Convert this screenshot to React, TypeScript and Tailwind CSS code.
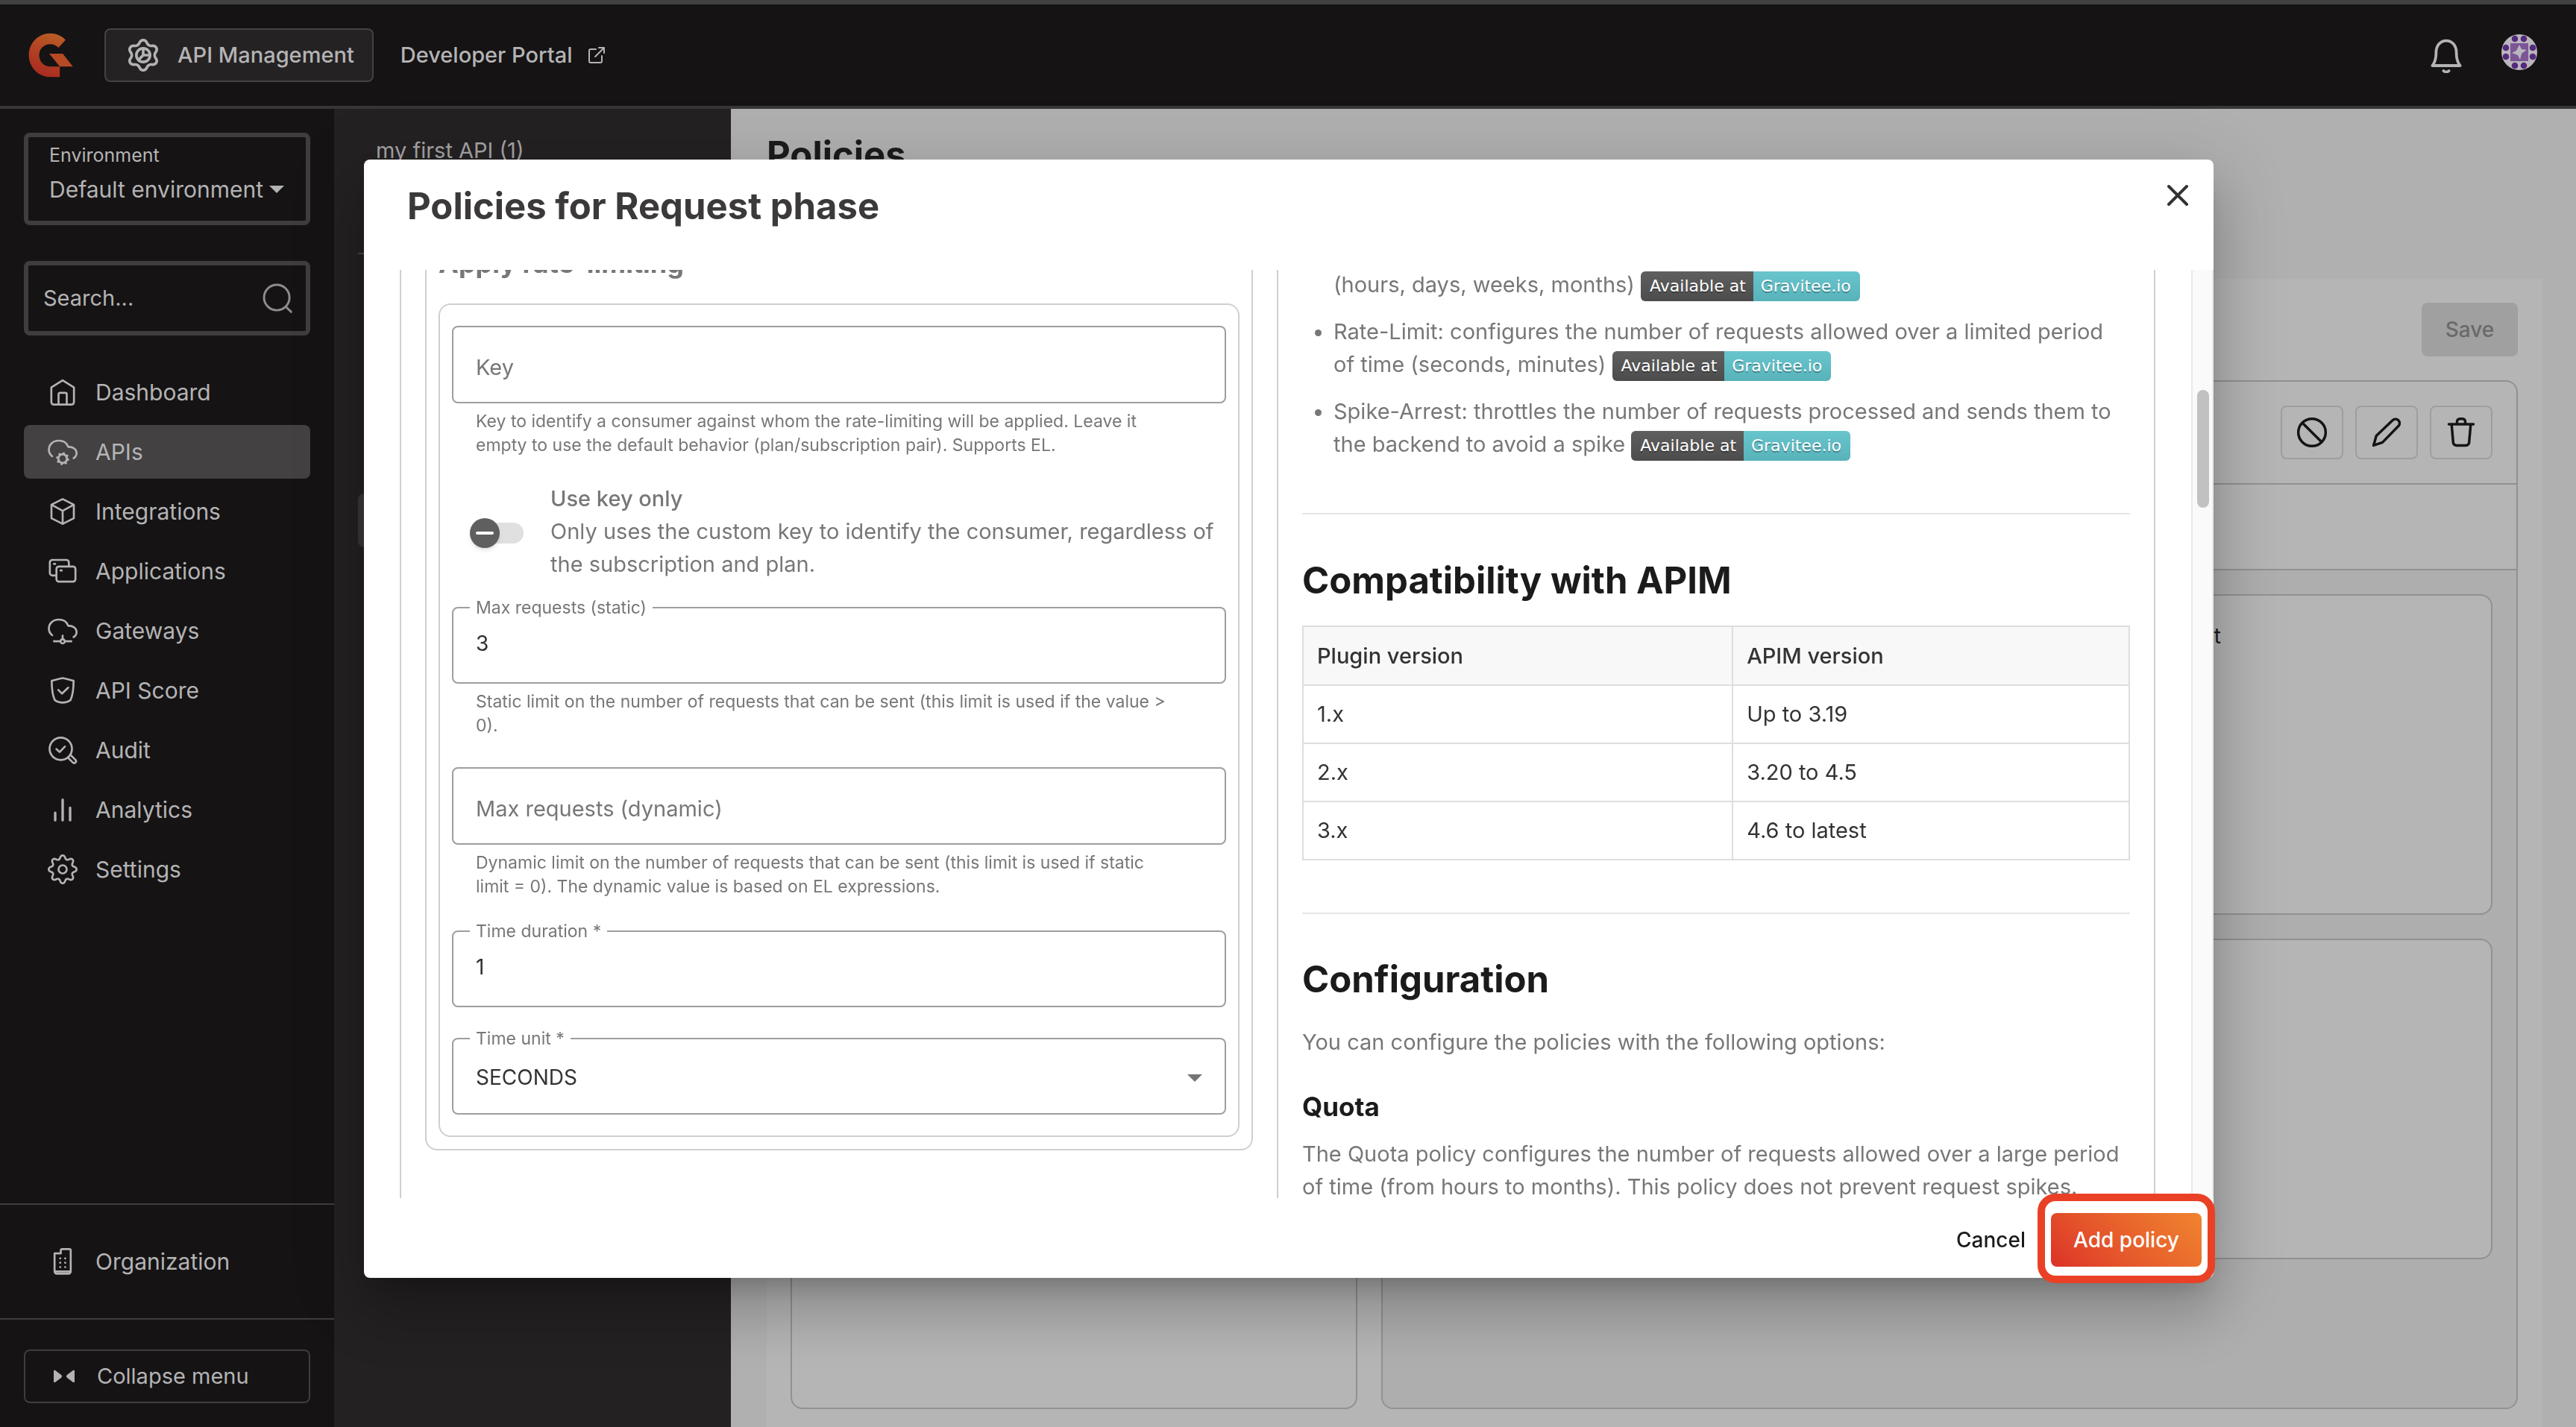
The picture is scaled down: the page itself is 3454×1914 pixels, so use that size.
import { useId, type ReactNode } from "react";

/** Closed outline of a cog with rounded teeth, centred in a 24 x 24 box. */
function cogPath(teeth: number, radius: number, depth: number, sharp: number) {
  const points: string[] = [];
  for (let i = 0; i < 180; i++) {
    const angle = (i / 180) * Math.PI * 2;
    const wave = Math.tanh(sharp * Math.cos(teeth * angle)) / Math.tanh(sharp);
    const r = radius + depth * wave;
    points.push(`${(12 + r * Math.sin(angle)).toFixed(2)} ${(12 - r * Math.cos(angle)).toFixed(2)}`);
  }
  return `M${points.join("L")}Z`;
}

function Icon({ children, className = "size-10" }: { children: ReactNode; className?: string }) {
  return (
    <svg
      viewBox="0 0 24 24"
      className={`${className} shrink-0`}
      fill="none"
      stroke="currentColor"
      strokeWidth="1.6"
      strokeLinecap="round"
      strokeLinejoin="round"
      aria-hidden="true"
    >
      {children}
    </svg>
  );
}

const cloud = "M3.6 15.6C2 14.4.9 12.6.9 10.4.9 6.200 4.300 3 8.800 3c3.600 0 6.600 1.900 7.700 5 3.800-.2 6.700 1.900 6.700 5.100 0 1.700-.9 3.200-2.400 4";

const navItems: { label: string; active?: boolean; icon: ReactNode }[] = [
  {
    label: "Dashboard",
    icon: (
      <>
        <path d="M2.900 8.200 12 2.500l9.100 5.700V20a2 2 0 0 1-2 2H4.900a2 2 0 0 1-2-2Z" />
        <path d="M8.700 22v-8.300a1.200 1.200 0 0 1 1.200-1.200h4.200a1.200 1.200 0 0 1 1.200 1.200V22" />
      </>
    ),
  },
  {
    label: "APIs",
    active: true,
    icon: (
      <>
        <path d={cloud} />
        <circle cx="12" cy="17.500" r="3.500" strokeWidth="1.800" />
        <circle cx="12" cy="17.500" r="4.600" strokeWidth="1.300" strokeDasharray="1.600 2.010" strokeLinecap="butt" />
      </>
    ),
  },
  {
    label: "Integrations",
    icon: (
      <>
        <path d="M12 2 21 6.500v11L12 22l-9-4.500v-11Z" />
        <path d="M3.200 6.700 12 11.500l8.800-4.800M12 11.500V22" />
      </>
    ),
  },
  {
    label: "Applications",
    icon: (
      <>
        <rect x="7" y="8.300" width="15.300" height="12.200" rx="2" />
        <path d="M7 15.500H3.700a2 2 0 0 1-2-2V5a2 2 0 0 1 2-2H15a2 2 0 0 1 2 2v3.300M5 6.200h1M10.300 11.500h1" />
      </>
    ),
  },
  {
    label: "Gateways",
    icon: (
      <>
        <path d={cloud} />
        <circle cx="12" cy="20.500" r="1.700" />
        <path d="M12 18.800V16M5 20.500h5.300M13.700 20.500H19" />
      </>
    ),
  },
  {
    label: "API Score",
    icon: (
      <>
        <path d="M3.200 4.300C6 3.700 9 2.600 12 2.100c3 .5 6 1.600 8.800 2.200 0 6-.6 11.200-2.400 15.400-1.900 1.400-4 2.100-6.400 2.100s-4.500-.7-6.400-2.100C3.800 15.500 3.200 10.300 3.200 4.300Z" />
        <path d="m8.500 11.600 3 3 5-4.800" />
      </>
    ),
  },
  {
    label: "Audit",
    icon: (
      <>
        <circle cx="10.500" cy="11" r="9" />
        <path d="m7 11.200 2.600 2.400 4.200-4.400M16.200 18l3.900 4a1.500 1.500 0 0 0 2.200-2.100l-4-4" />
      </>
    ),
  },
  { label: "Analytics", icon: <path d="M6 20.500v-6M12 20.500V4M18 20.500v-10" strokeWidth="2" /> },
  {
    label: "Settings",
    icon: (
      <>
        <path d={cogPath(8, 9.800, 1.400, 1)} />
        <circle cx="12" cy="12" r="3.300" />
      </>
    ),
  },
];

function TopBar() {
  return (
    <header className="flex h-[146px] shrink-0 items-center border-t-[6px] border-b-4 border-t-[#424142] border-b-[#383738] bg-[#151314] pr-[52px] pl-[38px] text-[#b4b3b4]">
      <svg viewBox="55 40 178 178" className="size-[60px]" role="img" aria-label="Gravitee">
        <defs>
          <linearGradient id="logo-fill" x1="0.600" y1="0" x2="0.300" y2="1">
            <stop offset="0" stopColor="#b85c25" />
            <stop offset="0.500" stopColor="#b23f22" />
            <stop offset="1" stopColor="#a82a20" />
          </linearGradient>
        </defs>
        <path
          d="M203 68C187 51 165 42 142 42 95 42 57 80 57 129s38 87 85 87h38v-42h-38c-25 0-44-19-44-45s19-44 44-44c13 0 24 5 33 14Z"
          fill="url(#logo-fill)"
        />
        <path d="M138 123h54l40 51h-52Z" fill="#b54a25" />
      </svg>
      <button className="ml-[42px] flex h-[72px] items-center gap-6 rounded-lg border-2 border-[#444243] bg-[#242223] pr-6 pl-7">
        <Icon className="size-11">
          <g strokeWidth="2">
            <path d={cogPath(6, 9.700, 1.300, 1)} />
            <circle cx="12" cy="12" r="5" />
            <path d="M12 7v5h4.500M12 12l-3.500 3.500" />
          </g>
        </Icon>
        <span className="text-[29px] leading-10 font-medium">API Management</span>
      </button>
      <a href="#portal" className="ml-9 flex items-center gap-5 text-[29px] leading-10 font-medium">
        Developer Portal
        <Icon className="size-6">
          <path d="M11 4H4a2 2 0 0 0-2 2v14a2 2 0 0 0 2 2h13a2 2 0 0 0 2-2v-7M15 2h7v7M22 2 10 14" strokeWidth="2" />
        </Icon>
      </a>
      <button className="ml-auto" aria-label="Notifications">
        <Icon className="size-12">
          <path d="M2.700 19c1.800-2 2.500-4.800 2.500-8.700C5.200 5.600 8 2.300 12 2.300s6.800 3.300 6.800 8c0 3.900.7 6.700 2.500 8.700ZM10.200 22.500c1 1 2.600 1 3.600 0" strokeWidth="1.900" />
        </Icon>
      </button>
      <button className="mb-2 ml-[50px]" aria-label="User menu">
        <svg viewBox="0 0 48 48" className="size-12" aria-hidden="true">
          <clipPath id="avatar-clip">
            <circle cx="24" cy="24" r="24" />
          </clipPath>
          <g clipPath="url(#avatar-clip)">
            <rect width="48" height="48" fill="#b9b6bd" />
            <path d="M0 12 12 0H0ZM48 12 36 0h12ZM0 36l12 12H0ZM48 36 36 48h12Z" fill="#9585ad" />
            <rect x="12" y="12" width="24" height="24" fill="#7c5596" />
            <path d="m24 14 3 6 7 1-6 4-1 1-2 8-3-6-8-3 6-3Z" fill="#b9b6bd" />
            <g fill="#552a7c">
              <circle cx="18" cy="6" r="4.300" />
              <circle cx="30" cy="6" r="4.300" />
              <circle cx="18" cy="42" r="4.300" />
              <circle cx="30" cy="42" r="4.300" />
              <circle cx="6" cy="18" r="4.300" />
              <circle cx="6" cy="30" r="4.300" />
              <circle cx="42" cy="18" r="4.300" />
              <circle cx="42" cy="30" r="4.300" />
            </g>
          </g>
        </svg>
      </button>
    </header>
  );
}

function Sidebar() {
  return (
    <aside className="flex w-[448px] shrink-0 flex-col bg-[#151314] text-[30px] leading-10 text-[#b4b3b4]">
      <div className="flex flex-col px-8 pt-8">
        <button className="flex h-[124px] flex-col items-start rounded-lg border-[6px] border-[#3f3d3e] px-7 pt-1.5 text-left">
          <span className="text-[25px] leading-9">Environment</span>
          <span className="mt-1 flex items-center gap-2 leading-[48px] whitespace-nowrap">
            Default environment
            <svg viewBox="0 0 20 10" className="h-2.5 w-5" aria-hidden="true">
              <path d="M0 0h20L10 10Z" fill="currentColor" />
            </svg>
          </span>
        </button>
        <label className="mt-12 flex h-[100px] items-center rounded-lg border-[6px] border-[#3f3d3e] pr-4 pl-5">
          <span className="sr-only">Search</span>
          <input
            type="text"
            placeholder="Search..."
            className="w-full min-w-0 bg-transparent text-[29px] placeholder:text-[#b4b3b4]"
          />
          <Icon className="size-11 text-[#8f8c8d]">
            <circle cx="11.500" cy="11.500" r="9.300" />
            <path d="m18.500 18.500 3.500 3.500" />
          </Icon>
        </label>
        <nav className="mt-10 flex flex-col gap-2" aria-label="Main">
          {navItems.map((item) => (
            <a
              key={item.label}
              href={`#${item.label}`}
              className={
                item.active
                  ? "flex h-[72px] items-center gap-6 rounded-lg bg-[#434142] pl-8"
                  : "flex h-[72px] items-center gap-6 rounded-lg pl-8"
              }
            >
              <Icon>{item.icon}</Icon>
              {item.label}
            </a>
          ))}
        </nav>
      </div>
      <div className="mt-auto border-t-2 border-[#3f3d3e] px-8 pt-10 pb-10">
        <a href="#organization" className="flex h-[72px] items-center gap-6 pl-8">
          <Icon>
            <path d="M5.500 5.500h5V3.200a1.200 1.200 0 0 1 1.200-1.200h5.600a1.200 1.200 0 0 1 1.200 1.200V20a1.800 1.800 0 0 1-1.800 1.800H7.300A1.800 1.800 0 0 1 5.500 20ZM5.500 20h13" />
            <path d="M10 9.500h.1M14 9.500h.1M10 13h.1M14 13h.1M10 16.500h.1M14 16.500h.1" />
          </Icon>
          Organization
        </a>
      </div>
      <div className="border-t-2 border-[#3f3d3e] px-8 pt-10 pb-8">
        <button className="flex h-[72px] w-full items-center gap-6 rounded-lg border-2 border-[#3f3d3e] pl-8 text-[29px]">
          <svg viewBox="0 0 40 40" className="size-10" fill="currentColor" aria-hidden="true">
            <path d="M6 13q0-2 2-1l8 6q2 2 0 4l-8 6q-2 1-2-1ZM34 13q0-2-2-1l-8 6q-2 2 0 4l8 6q2 1 2-1Z" />
          </svg>
          Collapse menu
        </button>
      </div>
    </aside>
  );
}

function ToolButton({ label, children }: { label: string; children: ReactNode }) {
  return (
    <button aria-label={label} className="flex h-[72px] w-[84px] items-center justify-center rounded-lg border-2 border-[#9e9e9e]">
      <Icon className="size-11 text-[#151314]">
        <g strokeWidth="1.900">{children}</g>
      </Icon>
    </button>
  );
}

function Background() {
  return (
    <div className="flex min-h-0 flex-1">
      <Sidebar />
      <nav className="w-[532px] shrink-0 overflow-hidden bg-[#242122] px-8 pt-[34px] text-[29px] leading-[44px] text-[#a5a3a4]" aria-label="API">
        <p className="px-6">my first API (1)</p>
        <hr className="mt-[115px] border-t-2 border-[#4a4849]" />
        <div className="mt-[321px] h-[72px] rounded-lg bg-[#3a3839]" />
      </nav>
      <main className="flex min-w-0 flex-1 flex-col bg-[#b0b0b0] pr-[46px] pl-12 text-[#1c1b1c]">
        <h1 className="mt-8 text-[49px] leading-[60px] font-bold">Policies</h1>
        <section className="mt-[136px] flex min-h-0 flex-1 flex-col bg-[#b5b5b5] px-8 pt-8 pb-6">
          <div className="flex justify-end">
            <button disabled className="h-[72px] w-[129px] rounded-lg bg-[#a0a0a0] text-[28px] font-medium text-[#6a6a6a]">
              Save
            </button>
          </div>
          <div className="mt-8 flex min-h-0 flex-1 gap-8">
            <div className="w-[760px] rounded-[16px] border-2 border-[#919191]" />
            <div className="flex flex-1 flex-col overflow-hidden rounded-[16px] border-2 border-[#919191]">
              <div className="flex h-[138px] shrink-0 items-center justify-end gap-4 border-b-2 border-[#919191] pr-8">
                <ToolButton label="Disable">
                  <circle cx="12" cy="12" r="10" />
                  <path d="m5 5 14 14" />
                </ToolButton>
                <ToolButton label="Edit">
                  <path d="m2.500 21.500 2-7L16.700 2.900a3 3 0 0 1 4.200 4.200L9 19.300Z" />
                </ToolButton>
                <ToolButton label="Delete">
                  <path d="M3 6h18M9 6V4a2 2 0 0 1 2-2h2a2 2 0 0 1 2 2v2M5 6l1.200 13.500a2.300 2.300 0 0 0 2.300 2h7a2.300 2.300 0 0 0 2.300-2L19 6" />
                </ToolButton>
              </div>
              <div className="h-[115px] shrink-0 border-b-2 border-[#919191]" />
              <div className="flex flex-1 flex-col gap-8 bg-[#aeaeae] p-8">
                <div className="flex h-[430px] items-start justify-end rounded-[16px] border-2 border-[#919191] bg-[#b5b5b5] pt-8 pr-[362px] text-[29px] leading-[44px]">
                  t
                </div>
                <div className="h-[430px] rounded-[16px] border-2 border-[#919191] bg-[#b5b5b5]" />
              </div>
            </div>
          </div>
        </section>
      </main>
    </div>
  );
}

function OutlinedBox({ id, label, children }: { id: string; label: string; children: ReactNode }) {
  return (
    <fieldset className="h-[118px] rounded-lg border-2 border-[#9e9e9e]">
      <legend className="ml-[22px] px-2 text-[23px] leading-8 text-[#777]">
        <label htmlFor={id}>{label}</label>
      </legend>
      {children}
    </fieldset>
  );
}

function NumberField({ label, value }: { label: string; value: string }) {
  const id = useId();
  return (
    <OutlinedBox id={id} label={label}>
      <input id={id} defaultValue={value} className="mt-3 block w-full px-[30px] text-[28px] leading-10 text-[#333]" />
    </OutlinedBox>
  );
}

function EmptyField({ label }: { label: string }) {
  return (
    <input
      aria-label={label}
      placeholder={label}
      className="block h-[104px] w-full rounded-lg border-2 border-[#9e9e9e] px-[30px] pt-1.5 text-[29px] placeholder:text-[#777]"
    />
  );
}

function Hint({ children }: { children: ReactNode }) {
  return <p className="mt-2 pr-14 pl-8 text-[23px] leading-8 text-[#777]">{children}</p>;
}

function PolicyForm() {
  return (
    <form className="flex-1 border-l-2 border-[#cfcfcf] px-8">
      <div className="-mt-4 rounded-b-[16px] border-2 border-[#cfcfcf] px-4 pb-4">
        <h3 className="-mt-[17px] text-[36px] leading-[44px] font-bold text-[#777]">Apply rate-limiting</h3>
        <div className="mt-8 rounded-[16px] border-2 border-[#cfcfcf] px-4 pt-7 pb-7">
          <EmptyField label="Key" />
          <Hint>
            Key to identify a consumer against whom the rate-limiting will be applied. Leave it empty to use the default
            behavior (plan/subscription pair). Supports EL.
          </Hint>
          <label className="mt-[34px] flex items-center pl-6 text-[29px] leading-[44px] text-[#777]">
            <input type="checkbox" role="switch" className="peer sr-only" />
            <span className="relative mt-1 flex h-10 w-[72px] shrink-0 items-center">
              <span className="ml-auto h-7 w-[52px] rounded-full bg-[#e0e0e0]" />
              <span className="absolute left-0 flex size-10 items-center justify-center rounded-full bg-[#5f5f5f] shadow-md">
                <span className="h-1 w-6 rounded-full bg-white" />
              </span>
            </span>
            <span className="ml-9">
              <span className="block font-medium">Use key only</span>
              Only uses the custom key to identify the consumer, regardless of the subscription and plan.
            </span>
          </label>
          <div className="mt-5">
            <NumberField label="Max requests (static)" value="3" />
            <Hint>Static limit on the number of requests that can be sent (this limit is used if the value &gt; 0).</Hint>
          </div>
          <div className="mt-10">
            <EmptyField label="Max requests (dynamic)" />
            <Hint>
              Dynamic limit on the number of requests that can be sent (this limit is used if static{" "}
              <span className="whitespace-nowrap">limit = 0).</span> The dynamic value is based on EL expressions.
            </Hint>
          </div>
          <div className="mt-7">
            <NumberField label="Time duration *" value="1" />
          </div>
          <div className="mt-[26px]">
            <OutlinedBox id="time-unit" label="Time unit *">
              <div className="relative mt-4">
                <select id="time-unit" className="block w-full appearance-none px-[30px] text-[28px] leading-10 text-[#333]">
                  <option>SECONDS</option>
                </select>
                <svg viewBox="0 0 20 10" className="pointer-events-none absolute top-4 right-[30px] h-2.5 w-5" aria-hidden="true">
                  <path d="M0 0h20L10 10Z" fill="#757575" />
                </svg>
              </div>
            </OutlinedBox>
          </div>
        </div>
      </div>
    </form>
  );
}

function AvailableBadge() {
  return (
    <span className="inline-flex h-10 overflow-hidden rounded-md align-middle font-['DejaVu_Sans'] text-[22px] leading-10 text-white text-shadow-[0_2px_0_rgb(0_0_0/0.3)]">
      <span className="bg-linear-to-b from-[#5f5f5f] to-[#4c4c4c] pr-2.5 pl-3">Available at</span>
      <span className="bg-linear-to-b from-[#69c5cd] to-[#57b2ba] pr-3 pl-2.5">Gravitee.io</span>
    </span>
  );
}

const versions = [
  ["1.x", "Up to 3.19"],
  ["2.x", "3.20 to 4.5"],
  ["3.x", "4.6 to latest"],
];

function Documentation() {
  return (
    <article className="flex-1 border-x-2 border-[#cfcfcf] px-8 text-[29px] leading-[44px] text-[#777]">
      <ul className="-mt-[46px] flex list-disc flex-col gap-[19px] pr-1 pl-[42px]">
        <li>
          Quota: configures the number of requests allowed over a period of
          <br />
          (hours, days, weeks, months) <AvailableBadge />
        </li>
        <li>
          Rate-Limit: configures the number of requests allowed over a limited period of time (seconds, minutes){" "}
          <AvailableBadge />
        </li>
        <li>
          Spike-Arrest: throttles the number of requests processed and sends them to the backend to avoid a spike{" "}
          <AvailableBadge />
        </li>
      </ul>
      <hr className="mt-[70px] border-t-2 border-[#e6e6e6]" />
      <h2 className="mt-[59px] text-[49px] leading-[60px] font-bold text-[#1c1b1b]">Compatibility with APIM</h2>
      <table className="mt-[30px] w-full border-collapse text-[#333]">
        <thead>
          <tr className="h-[79px] bg-[#f8f8f8] text-left">
            <th className="w-[52%] border-2 border-[#dedede] px-[18px] font-medium">Plugin version</th>
            <th className="border-2 border-[#dedede] px-[18px] font-medium">APIM version</th>
          </tr>
        </thead>
        <tbody>
          {versions.map(([plugin, apim]) => (
            <tr key={plugin} className="h-[78px]">
              <td className="border-2 border-[#dedede] px-[18px]">{plugin}</td>
              <td className="border-2 border-[#dedede] px-[18px]">{apim}</td>
            </tr>
          ))}
        </tbody>
      </table>
      <hr className="mt-[70px] border-t-2 border-[#e6e6e6]" />
      <h2 className="mt-[58px] text-[49px] leading-[60px] font-bold text-[#1c1b1b]">Configuration</h2>
      <p className="mt-8">You can configure the policies with the following options:</p>
      <h3 className="mt-[42px] text-[35px] leading-[44px] font-bold text-[#1c1b1b]">Quota</h3>
      <p className="mt-5">
        The Quota policy configures the number of requests allowed over a large period of time (from hours to months).
        This policy does not prevent request spikes.
      </p>
    </article>
  );
}

function PolicyDialog() {
  return (
    <div className="fixed inset-0 flex pt-[214px] pr-[486px] pb-[200px] pl-[488px]">
      <div
        role="dialog"
        aria-labelledby="dialog-title"
        className="flex min-w-0 flex-1 flex-col rounded-lg bg-white shadow-[0_22px_30px_-14px_rgba(0,0,0,0.2),0_48px_76px_6px_rgba(0,0,0,0.14),0_18px_92px_16px_rgba(0,0,0,0.12)]"
      >
        <div className="flex h-[148px] shrink-0 items-start justify-between pt-8 pr-8 pl-[58px]">
          <h2 id="dialog-title" className="text-[49px] leading-[62px] font-bold text-[#3b393a]">
            Policies for Request phase
          </h2>
          <button aria-label="Close">
            <svg viewBox="0 0 32 32" className="size-8" stroke="#333" strokeWidth="4" strokeLinecap="round" aria-hidden="true">
              <path d="m4 4 24 24M28 4 4 28" />
            </svg>
          </button>
        </div>
        <div className="flex min-h-0 flex-1 overflow-hidden pl-12">
          <div className="flex min-w-0 flex-1">
            <PolicyForm />
            <Documentation />
          </div>
          <div className="ml-12 w-[30px] shrink-0 border-x-2 border-[#e9e9e9] bg-[#fafafa] px-1.5 pt-[161px]">
            <div className="h-[158px] w-4 rounded-full bg-[#c1c1c1]" />
          </div>
        </div>
        <div className="flex h-[107px] shrink-0 items-start justify-end gap-[34px] pr-4 pt-5 text-[28px]">
          <button className="h-[72px] font-medium text-[#1c1b1b]">Cancel</button>
          <div className="relative">
            <button className="h-[72px] w-[202px] rounded-lg bg-linear-45 from-[#dc3028] to-[#f0842f] font-medium text-white">
              Add policy
            </button>
            <span className="pointer-events-none absolute -inset-x-[18px] -top-[26px] -bottom-[22px] rounded-[24px] border-[10px] border-[#ea4126]" />
          </div>
        </div>
      </div>
    </div>
  );
}

export default function App() {
  return (
    <div className="flex h-screen flex-col overflow-hidden font-[Inter,'Noto_Sans',sans-serif]">
      <TopBar />
      <Background />
      <PolicyDialog />
    </div>
  );
}
